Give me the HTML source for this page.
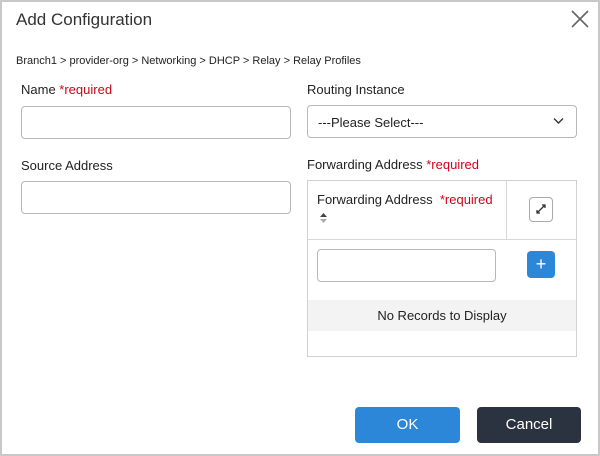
<!DOCTYPE html>
<html><head><style>
*{box-sizing:border-box;margin:0;padding:0}
body{width:600px;height:456px;background:#fff;font-family:"Liberation Sans",sans-serif;color:#222;position:relative;overflow:hidden}
.frame{position:absolute;left:0;top:0;width:600px;height:456px;border:2px solid #c8c8c8}
.a{position:absolute}
.t{font-size:17px;left:16px;top:10px;color:#333}
.bc{font-size:11px;left:16px;top:55px;color:#222}
.l{font-size:13px;color:#222}
.r{color:#d0021b}
.in{border:1px solid #b8b8b8;border-radius:4px;background:#fff}
.btn{border-radius:4px;color:#fff;font-size:15px;text-align:center;line-height:35px}
</style></head><body>
<div class="frame"></div>
<div class="a t">Add Configuration</div>
<svg class="a" style="left:571px;top:10px" width="18" height="18" viewBox="0 0 18 18"><path d="M1 1L17 17M17 1L1 17" stroke="#666" stroke-width="1.6"/></svg>
<div class="a bc">Branch1 &gt; provider-org &gt; Networking &gt; DHCP &gt; Relay &gt; Relay Profiles</div>
<div class="a l" style="left:21px;top:82px">Name <span class="r">*required</span></div>
<div class="a in" style="left:21px;top:106px;width:270px;height:33px"></div>
<div class="a l" style="left:307px;top:82px">Routing Instance</div>
<div class="a in" style="left:307px;top:105px;width:270px;height:33px"></div>
<div class="a l" style="left:318px;top:115px">---Please Select---</div>
<svg class="a" style="left:553px;top:117px" width="11" height="8" viewBox="0 0 11 8"><path d="M1 1.5L5.5 6L10 1.5" stroke="#333" stroke-width="1.4" fill="none"/></svg>
<div class="a l" style="left:21px;top:158px">Source Address</div>
<div class="a in" style="left:21px;top:181px;width:270px;height:33px"></div>
<div class="a l" style="left:307px;top:157px">Forwarding Address <span class="r">*required</span></div>
<div class="a" style="left:307px;top:180px;width:270px;height:177px;border:1px solid #d0d0d0"></div>
<div class="a" style="left:506px;top:180px;width:1px;height:59px;background:#d8d8d8"></div>
<div class="a" style="left:308px;top:239px;width:268px;height:1px;background:#d8d8d8"></div>
<div class="a l" style="left:317px;top:192px">Forwarding Address &nbsp;<span class="r">*required</span></div>
<svg class="a" style="left:320px;top:213px" width="7" height="10" viewBox="0 0 7 10"><path d="M3.5 0L7 4H0Z" fill="#444"/><path d="M3.5 10L7 6H0Z" fill="#aaa"/></svg>
<div class="a" style="left:529px;top:197px;width:24px;height:25px;border:1px solid #aaa;border-radius:4px"></div>
<svg class="a" style="left:534px;top:202px" width="14" height="14" viewBox="0 0 14 14"><path d="M3 11L11 3M8 3H11V6M3 8V11H6" stroke="#333" stroke-width="1.3" fill="none"/></svg>
<div class="a in" style="left:317px;top:249px;width:179px;height:33px"></div>
<div class="a btn" style="left:527px;top:251px;width:28px;height:27px;background:#2d87d8;line-height:26px;font-size:18px">+</div>
<div class="a" style="left:308px;top:300px;width:268px;height:31px;background:#f3f3f3;font-size:13px;text-align:center;line-height:31px">No Records to Display</div>
<div class="a btn" style="left:355px;top:407px;width:105px;height:36px;background:#2d87d8">OK</div>
<div class="a btn" style="left:477px;top:407px;width:104px;height:36px;background:#2c3340">Cancel</div>
</body></html>
